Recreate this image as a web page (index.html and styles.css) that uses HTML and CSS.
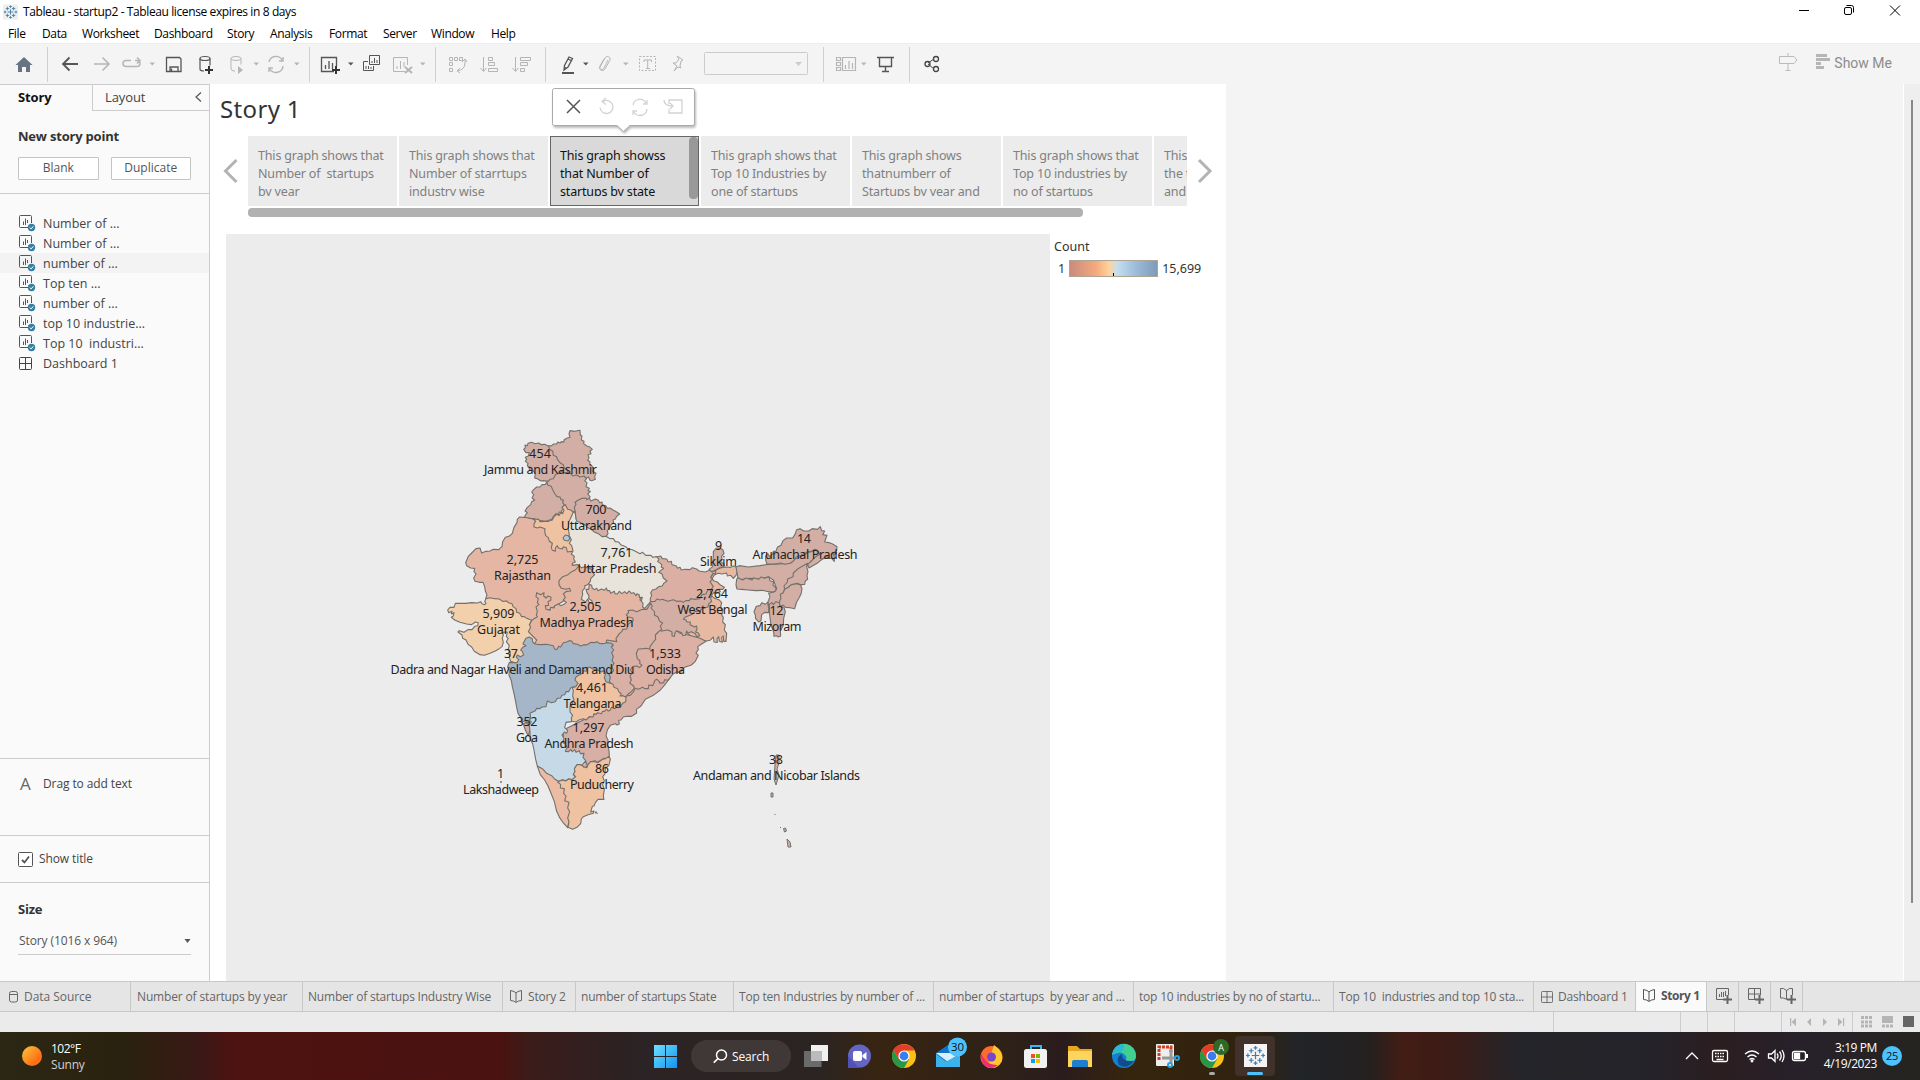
FILE: index.html
```html
<!DOCTYPE html>
<html lang="en">
<head>
<meta charset="utf-8">
<title>Tableau - startup2</title>
<link rel="stylesheet" href="styles.css">
</head>
<body>
<svg class="defs" aria-hidden="true">
  <defs>
    <symbol id="sheet" viewBox="0 0 17 17"><path d="M9 12.500H1.500a1 1 0 0 1-1-1v-10a1 1 0 0 1 1-1h10a1 1 0 0 1 1 1V8M4.500 10V6.500M6.500 10V3.500M8.500 8V5" fill="none" stroke="#555"/><circle cx="12.500" cy="12.500" r="3.700" fill="#3a7f9f"/><path d="m10.700 12.500 1.400 1.400 2.300-2.600" fill="none" stroke="#fff"/></symbol>
    <symbol id="grid" viewBox="0 0 13 13"><path d="M.5 1.500a1 1 0 0 1 1-1h10a1 1 0 0 1 1 1v10a1 1 0 0 1-1 1h-10a1 1 0 0 1-1-1zM6.500.5v12M.5 6.500h12" fill="none" stroke="currentColor"/></symbol>
    <symbol id="book" viewBox="0 0 13 13"><path d="M6 3 4 1.500.5.5v10l3 .5L6 12.500 8.500 11l3-.5V.5L8 1.500zM6 3v9" fill="none" stroke="currentColor"/></symbol>
    <symbol id="plus" viewBox="0 0 9 9"><path d="M4.500 0v9M0 4.500h9" stroke="currentColor" stroke-width="2"/></symbol>
    <symbol id="caret" viewBox="0 0 6 4"><path d="M0 0h6L3 4z" fill="currentColor"/></symbol>
    <symbol id="tableau" viewBox="0 0 20 20"><path d="M10 6v8M6 10h8M5.500 2.500v5M3 5h5M14.500 2.500v5M12 5h5M5.500 12.500v5M3 15h5M14.500 12.500v5M12 15h5M10 0v4M8 2h4M10 16v4M8 18h4M2 8v4M0 10h4M18 8v4M16 10h4" stroke="#3f7ea8" stroke-width="1.300"/></symbol>
    <symbol id="chrome" viewBox="0 0 24 24"><circle cx="12" cy="12" r="12" fill="#fbc116"/><path d="M1.600 6A12 12 0 0 0 12 24l5.200-9L12 12 6.800 15z" fill="#279847"/><path d="M1.600 6A12 12 0 0 1 22.400 6.500H12L6.800 15z" fill="#e33b2e"/><circle cx="12" cy="12" r="5.600" fill="#fff"/><circle cx="12" cy="12" r="4.400" fill="#3b7ded"/></symbol>
  </defs>
</svg>
<div class="window">
  <header class="titlebar">
    <svg class="logo" width="15" height="16" viewBox="-1 -1 22 22"><rect x="-1" y="-1" width="22" height="22" fill="#eee"/><use href="#tableau" width="20" height="20"/></svg>
    <span class="title">Tableau - startup2 - Tableau license expires in 8 days</span>
    <svg class="winbtns" width="110" height="20" viewBox="0 0 110 20" fill="none" stroke="#000"><path d="M4 10.500h10M95 5.500l10 10M105 5.500l-10 10"/><rect x="49.500" y="7.500" width="7" height="7" rx="1.500"/><path d="M51.500 5.500h5a2 2 0 0 1 2 2v5"/></svg>
  </header>
  <nav class="menu"><span>File</span><span>Data</span><span>Worksheet</span><span>Dashboard</span><span>Story</span><span>Analysis</span><span>Format</span><span>Server</span><span>Window</span><span>Help</span></nav>
  <div class="toolbar">
    <svg width="960" height="40" viewBox="0 44 960 40" fill="none" stroke="#b5b5b5">
      <path d="M47.500 47v35M309.500 47v35M435.500 47v35M545.500 47v35M823.500 47v35M909.500 47v35" stroke="#d0d0d0"/>
      <path d="m24 57 8.500 8h-2.500v7h-4v-5h-4v5h-4v-7h-2.500z" fill="#667383" stroke="none"/>
      <path d="M78 64H63m6.500-6.500L63 64l6.500 6.500" stroke="#555" stroke-width="1.800"/>
      <path d="M94 64h15m-6.500-6.500L109 64l-6.500 6.500" stroke-width="1.500"/>
      <path d="M131 60.500h-5a3 3 0 0 0 0 6h11a3 3 0 0 0 3-3q0-3-3-3h-2m2-3 3 3-3 3" stroke-width="1.500"/>
      <path d="M166.500 57.500h13l1.500 1.500v12.500h-14.500zM170 71v-4h8v4M171.500 71v-2.500" stroke="#555" stroke-width="1.300"/>
      <ellipse cx="205" cy="58.500" rx="5" ry="2" stroke="#555" stroke-width="1.200"/><path d="M200 58.500V69q0 2 4 2M210 58.500v7" stroke="#555" stroke-width="1.200"/>
      <path d="M209 66v8M205 70h8" stroke="#333" stroke-width="2"/>
      <ellipse cx="236" cy="58.500" rx="5" ry="2"/><path d="M231 58.500V69q0 2 4 2M241 58.500v6"/><path d="M238 66v8l5-4z" fill="#b5b5b5" stroke="none"/>
      <path d="M269 62a7 7 0 0 1 13-2m1-3v4h-4M283 66a7 7 0 0 1-13 3m-1 3v-4h4" stroke-width="1.400"/>
      <path d="M334 71.500h-12.500v-14h15V66M325.500 69v-4M329 69v-8M332.500 69v-6" stroke="#555" stroke-width="1.300"/><path d="M336 66v8M332 70h8" stroke="#333" stroke-width="2"/>
      <path d="M369.500 55.500h10v9h-10zM372 63v-2M374.500 63v-5M377 63v-3M368 61.500h-4.500v9h10V66M366 69v-3M368.500 69v-3M371 69v-2" stroke="#555"/>
      <path d="M405 71.500h-11.500v-14h14V65M397 69v-3M400.500 69v-8M404 67v-5"/><path d="m405 67 7 6m0-6-7 6" stroke-width="2"/>
      <path d="M449.500 57.500h3v3h-3zM454.500 57.500h3v3h-3zM459.500 57.500h3v3h-3zM449.500 62.500h3v3h-3zM449.500 68.500h3v3h-3zM465 60v3q0 7-8 8m3-3-3 3 3 2M462 62l3-3 2 3"/>
      <path d="M483.500 57v14m-3-3 3 3.500 3-3.500M488.500 57.500h4v3h-4zM488.500 62.500h6v3h-6zM488.500 68.500h9v3h-9zM515.500 57v14m-3-3 3 3.500 3-3.500M520.500 57.500h10v3h-10zM520.500 62.500h7v3h-7zM520.500 68.500h4v3h-4z"/>
      <path d="m569 57 3.500 1.500-4.500 8.500-4 3 .5-4.500zM564 67l3 1.500M568 59l3 1.500" stroke="#555" stroke-width="1.300"/><path d="M562 73h12" stroke="#555" stroke-width="2"/>
      <path d="m608 60-4 8c-1.500 3-5 1-4-1l5-9c1.500-3 6-1 5 2l-5 9c-2 3-7 1-5-3l4-7"/>
      <path d="M639.500 56.500h16v14h-16z" stroke-dasharray="2 1.500"/><path d="M644 62v-2h7.500v2M647.700 60v8M646 68.500h4"/>
      <path d="m677 56 6 4-2 1-1 5 1 2-3-1-4 4 3-5-4-3 3 0 3-4z"/>
      <rect x="704.500" y="52.500" width="103" height="22" rx="1" stroke="#ccc"/><path d="M795 62h7l-3.500 4z" fill="#ccc" stroke="none"/>
      <path d="M836.500 57.500h4v3h-4zM836.500 62.500h4v3h-4zM836.500 67.500h4v3h-4zM842.500 57.500h13v13h-13zM845.500 69v-4M849 69v-8M852.500 69v-6" stroke-width="1.200"/>
      <path d="M877 57.500h17M879.500 58v8.500h12V58M885.500 67v4M882 71.500h7" stroke="#555" stroke-width="1.400"/>
      <path d="m928 63 6-4m-6 5 6 5" stroke="#444"/><circle cx="927.500" cy="64" r="2.500" stroke="#444" stroke-width="1.300"/><circle cx="936" cy="59" r="2.500" stroke="#444" stroke-width="1.300"/><circle cx="936" cy="69" r="2.500" stroke="#444" stroke-width="1.300"/>
      <g fill="#b5b5b5" stroke="none"><path d="M149.500 62.500h5.500l-2.700 3zM253.500 62.500h5.500l-2.700 3zM294 62.500h5.500l-2.700 3zM420 62.500h5.500l-2.700 3zM623 62.500h5.500l-2.700 3zM861 62.500h5.500l-2.700 3z"/><path d="M348 62.500h5.500l-2.700 3zM583 62.500h5.500l-2.700 3z" fill="#555"/></g>
    </svg>
    <div class="showme">
      <svg width="54" height="20" viewBox="0 0 54 20"><path d="M.5 3.500H15l3 3.500-3 3.500H.5zM9 0v3M9 11v6M6.500 17.500h5" fill="none" stroke="#bbb"/><path d="M37 1h11v3H37zM37 5h14v3H37zM37 9h5v3h-5zM37 13h8v3h-8z" fill="#b5b5b5"/></svg>
      <span>Show Me</span>
    </div>
  </div>
  <main class="work">
    <aside class="side">
      <div class="tabs"><b>Story</b><div class="layout"><span>Layout</span><svg width="7" height="10" viewBox="0 0 7 10"><path d="M6 .5 1 5l5 4.500" fill="none" stroke="#555" stroke-width="1.200"/></svg></div></div>
      <section class="new"><h2>New story point</h2><div class="btns"><button>Blank</button><button>Duplicate</button></div></section>
      <ul class="sheets">
        <li><svg><use href="#sheet" width="17" height="17"/></svg>Number of ...</li>
        <li><svg><use href="#sheet" width="17" height="17"/></svg>Number of ...</li>
        <li class="hot"><svg><use href="#sheet" width="17" height="17"/></svg>number of ...</li>
        <li><svg><use href="#sheet" width="17" height="17"/></svg>Top ten ...</li>
        <li><svg><use href="#sheet" width="17" height="17"/></svg>number of ...</li>
        <li><svg><use href="#sheet" width="17" height="17"/></svg>top 10 industrie...</li>
        <li><svg><use href="#sheet" width="17" height="17"/></svg>Top 10&nbsp; industri...</li>
        <li><svg><use href="#grid" width="13" height="13" y="2"/></svg>Dashboard 1</li>
      </ul>
      <section class="drag"><i>A</i>Drag to add text</section>
      <section class="show"><svg width="15" height="15" viewBox="0 0 15 15"><rect x=".5" y=".5" width="14" height="14" rx="1" fill="#fff" stroke="#555"/><path d="m4 8 2.500 2.500 4.500-6" fill="none" stroke="#555" stroke-width="1.800"/></svg>Show title</section>
      <section class="size"><h2>Size</h2><div class="select">Story (1016 x 964)<svg width="7" height="4"><use href="#caret" width="7" height="4"/></svg></div></section>
    </aside>
    <article class="story">
      <h1>Story 1</h1>
      <div class="nav">
        <svg class="prev" width="16" height="26" viewBox="0 0 16 26"><path d="M13.500 2 2.500 13l11 11" fill="none" stroke="#b3b3b3" stroke-width="3"/></svg>
        <div class="points">
          <div class="pt"><p>This graph shows that<br>Number of&nbsp; startups<br>by year</p></div>
          <div class="pt"><p>This graph shows that<br>Number of starrtups<br>industry wise</p></div>
          <div class="pt sel"><p>This graph showss<br>that Number of<br>startups by state</p><span class="thumb"></span></div>
          <div class="pt"><p>This graph shows that<br>Top 10 Industries by<br>one of startups</p></div>
          <div class="pt"><p>This graph shows<br>thatnumberr of<br>Startups by year and</p></div>
          <div class="pt"><p>This graph shows that<br>Top 10 industries by<br>no of startups</p></div>
          <div class="pt"><p>This graph<br>the top<br>and</p></div>
        </div>
        <svg class="next" width="16" height="26" viewBox="0 0 16 26"><path d="m2 2 11 11L2 24" fill="none" stroke="#b3b3b3" stroke-width="3"/></svg>
      </div>
      <div class="hbar"></div>
      <div class="viz">
        <svg class="map" width="824" height="747" viewBox="226 234 824 747">
          <!-- State outlines: shared borders are drawn by the later shape -->
          <g class="states" transform="translate(440 420) scale(.33333)">
            <polygon points="320,188 335,160 385,130 410,150 435,168 440,176 434,182 441,188 438,200 448,205 444,212 451,214 443,222 450,230 446,238 430,250 420,260 406,274 400,276 385,272 372,262 350,250 330,220"/>
            <polygon points="255,75 262,77 264,70 275,67 285,71 296,69 304,74 314,73 325,78 350,80 370,110 395,150 396,160 385,158 372,158 364,154 360,160 347,163 340,176 330,178 325,184 310,182 303,183 292,176 284,174 286,160 278,152 268,150 270,142 262,138 264,130 256,124 260,118 256,112 265,108 268,98 258,98 251,88 256,84"/>
            <polygon points="325,78 335,77 341,72 350,72 353,66 360,69 364,65 372,66 372,60 380,55 390,52 387,42 390,32 404,34 420,31 421,45 426,48 424,60 432,64 431,71 440,78 448,80 457,88 450,93 453,101 444,104 447,114 443,120 450,126 449,134 456,138 460,146 458,154 468,160 464,170 466,178 455,182 449,180 446,171 438,174 432,168 420,171 410,165 398,168 392,160 384,158 382,150 372,143 370,134 362,130 352,118 350,110 340,106 338,93 330,89"/>
            <polygon points="320,187 324,196 334,199 337,207 340,213 345,222 351,230 360,231 363,239 370,240 368,248 374,256 367,261 370,268 364,272 367,278 358,276 355,284 348,281 340,290 335,298 320,303 300,304 285,297 270,295 253,295 256,285 262,278 255,273 262,262 272,254 275,245 284,240 276,234 281,224 275,216 281,209 290,201 300,201 306,194 316,193"/>
            <polygon fill="#e5b6a3" points="253,292 238,291 232,298 231,308 222,322 217,340 207,349 196,352 188,365 186,380 176,389 160,388 150,393 138,394 125,399 120,384 108,386 95,399 85,409 77,428 80,437 92,444 104,445 102,455 108,462 101,474 105,484 118,487 129,487 134,500 136,513 141,525 137,536 180,560 215,590 275,605 310,580 410,520 480,450 430,410 400,370 340,310"/>
            <polygon fill="#e4b5a2" points="430,432 415,440 406,450 395,455 384,464 368,470 357,482 357,494 364,505 378,508 389,505 392,513 378,515 370,522 376,532 370,540 379,547 372,553 362,557 355,552 344,557 342,564 332,562 330,571 318,568 316,557 326,556 324,545 332,541 333,532 324,528 318,534 311,528 312,518 302,524 290,518 288,530 295,536 292,548 297,554 288,560 292,575 289,585 292,590 282,596 275,602 262,625 265,660 280,690 350,710 510,690 560,640 630,570 620,500 500,480"/>
            <polygon fill="#efc3a2" points="280,297 296,298 300,305 315,304 325,304 337,300 342,290 352,282 357,287 362,278 368,281 372,270 366,262 376,254 383,268 392,270 400,276 410,300 410,400 395,394 382,396 379,383 370,380 367,387 355,384 352,377 346,384 346,394 337,391 334,383 337,370 328,364 325,353 317,347 314,334 315,326 300,321 292,324 282,321 282,311 287,304"/>
            <polygon points="406,276 403,262 408,253 405,247 414,241 426,235 438,234 440,239 448,235 453,243 466,237 475,241 479,248 486,246 487,254 497,257 502,265 510,264 518,269 530,276 539,282 530,289 526,297 519,300 521,308 513,314 509,323 502,332 504,341 498,350 480,370 410,350"/>
            <polygon fill="#e7b8a2" points="820,460 828,449 844,443 858,441 872,442 880,438 890,442 892,455 888,466 880,475 872,466 862,468 860,459 846,462 834,460 823,465 817,475 820,482 832,486 840,494 853,502 848,508 836,508 841,515 830,520 822,517 814,526 824,535 838,540 845,548 842,560 849,570 845,585 850,592 848,606 856,614 853,630 860,640 858,664 851,664 850,648 845,652 847,667 838,664 836,650 831,657 832,667 822,666 820,651 810,661 795,664 770,665 700,600 760,560"/>
            <polygon fill="#dcafa4" points="650,411 662,408 667,416 680,417 685,426 694,424 696,434 708,437 713,445 720,442 724,450 735,448 750,449 757,443 770,447 777,453 795,456 810,451 817,456 828,450 826,461 818,461 812,472 817,479 810,485 820,500 812,510 815,530 750,550 630,560 600,540 630,450"/>
            <polygon fill="#d8afa5" points="370,930 370,1000 430,1050 440,1040 452,1025 465,1022 472,1027 490,1016 502,1014 508,1008 507,992 503,975 504,960 498,948 502,930 511,916 526,911 531,915 538,912 536,901 543,900 550,891 560,889 575,889 590,879 589,868 603,858 616,838 640,826 661,810 673,796 690,774 680,740 550,800 530,850"/>
            <polygon fill="#dcb0a5" points="640,620 665,632 700,625 720,640 745,645 780,655 798,664 785,672 773,680 775,688 768,699 775,706 766,724 754,735 734,742 724,750 722,760 712,755 698,763 690,774 683,781 674,779 671,788 660,790 657,784 651,778 645,781 638,797 626,795 625,806 614,806 608,802 595,808 586,805 580,816 571,826 556,829 540,760 560,650"/>
            <polygon fill="#e8e4dc" points="400,276 406,280 408,298 412,305 421,307 428,314 437,315 441,322 455,329 463,336 478,343 486,350 498,349 508,355 520,356 526,365 536,366 542,374 557,380 563,386 577,389 586,394 600,401 608,397 617,406 633,406 638,412 650,410 657,418 653,424 665,433 664,442 671,445 662,452 656,457 666,462 670,474 681,483 671,490 667,498 656,500 648,507 637,510 632,519 635,526 631,536 631,552 623,556 617,567 608,561 609,550 604,543 607,532 598,533 598,525 591,521 588,527 581,518 574,520 568,513 560,521 554,515 546,521 538,514 532,522 525,521 523,514 512,520 509,512 502,512 499,504 493,511 484,507 474,512 470,505 464,509 457,505 455,496 448,493 446,508 438,508 441,518 447,527 446,535 456,543 457,550 448,549 443,537 437,546 424,538 428,523 427,513 435,503 434,497 443,494 451,484 452,476 464,464 455,454 460,445 450,440 441,443 435,440 424,443 413,434 397,436 397,430 406,426 401,417 403,409 394,402 399,393 395,377 388,370 394,359 388,347 385,325 386,306 391,296"/>
            <polygon fill="#a8cadf" points="369,354 376,345 385,347 390,356 384,363 373,361"/>
            <polygon points="632,545 645,544 651,537 660,540 667,538 683,544 700,539 710,544 722,543 730,547 737,542 748,542 751,536 762,538 779,536 786,524 798,522 803,510 811,510 815,525 812,535 815,544 806,552 804,561 784,567 781,574 765,574 757,583 735,592 730,598 738,600 741,606 751,606 750,614 764,621 770,618 771,627 767,636 775,639 779,647 770,650 766,641 754,635 744,639 740,633 737,645 728,647 725,638 710,632 705,638 703,649 696,648 696,636 684,630 665,633 640,620 610,570"/>
            <polygon fill="#d8b0a5" points="607,568 621,568 632,550 637,558 633,564 644,576 643,585 654,591 659,604 668,609 661,618 665,628 655,636 646,645 647,658 640,666 630,680 630,688 618,685 610,686 595,687 589,700 592,716 600,723 599,730 606,736 598,743 591,738 578,740 571,750 577,758 570,768 574,780 569,789 581,798 583,804 575,814 565,822 558,829 540,830 500,800 490,730 500,660 530,665 528,655 538,641 546,634 548,628 560,627 565,612 580,602 578,594 563,590 559,584 566,578 564,572 577,570 590,575"/>
            <polygon fill="#f2d0ac" points="138,536 134,545 138,550 134,554 126,551 122,545 112,549 95,548 77,550 60,550 46,550 42,562 30,562 23,570 26,578 36,574 34,582 42,578 40,588 34,592 44,600 60,607 80,612 95,614 106,606 115,608 113,617 104,619 96,629 84,629 72,637 58,632 54,636 66,645 68,655 78,660 85,674 95,681 103,694 120,704 133,706 150,700 166,693 175,688 186,680 190,668 187,655 190,645 188,637 202,636 199,650 205,655 199,665 208,677 204,690 211,698 208,712 212,724 220,727 240,735 270,700 290,660 265,635 272,622 268,614 275,601 260,595 253,590 245,590 239,580 230,577 228,566 219,560 216,551 205,548 200,543 188,544 178,537 164,536 150,533"/>
            <polygon fill="#a5b6c8" points="258,655 268,651 277,656 278,666 285,672 300,674 320,673 340,677 343,686 350,689 356,679 362,681 370,668 380,666 388,662 395,663 400,671 412,673 422,678 432,674 440,675 453,667 464,668 470,665 478,670 490,671 501,668 514,670 520,675 514,681 521,690 515,698 520,710 516,722 522,730 516,740 521,752 514,759 506,761 511,772 508,785 515,792 505,800 480,820 400,870 270,895 265,910 257,902 246,906 242,892 234,880 231,867 227,845 222,820 217,800 214,782 207,766 208,752 203,740 208,727 220,728 231,728 236,719 229,712 232,705 241,710 251,705 247,694 242,690 248,682 258,677 249,672 252,665"/>
            <polygon points="250,912 258,907 267,915 270,930 265,948 256,930"/>
            <polygon fill="#ebbba3" points="292,1038 301,1064 314,1080 324,1098 334,1122 343,1145 350,1174 359,1193 370,1209 383,1223 395,1170 395,1110 350,1060"/>
            <polygon fill="#c5d9e7" points="400,800 392,804 386,815 378,815 374,824 365,826 362,834 352,835 346,845 334,848 322,843 318,860 306,861 300,866 290,865 286,872 270,880 272,892 269,901 274,905 268,915 270,935 270,955 278,972 282,990 287,1018 292,1038 307,1046 320,1060 335,1067 344,1077 355,1084 368,1079 378,1082 385,1077 396,1079 407,1071 400,1064 405,1055 404,1046 411,1035 420,1034 432,1039 438,1023 429,1012 432,1000 421,1001 418,992 408,997 404,989 397,995 392,988 386,995 376,994 382,982 375,972 368,966 372,955 366,945 373,936 380,940 383,931 374,923 378,907 395,905 420,880 420,810"/>
            <polygon fill="#efc3a2" points="353,1086 366,1080 377,1083 386,1077 397,1079 407,1070 400,1063 405,1055 403,1046 411,1034 420,1034 432,1039 440,1043 444,1034 452,1025 465,1025 474,1028 488,1018 497,1016 507,1009 511,1018 507,1035 496,1046 495,1062 488,1070 493,1082 488,1094 493,1108 490,1128 492,1138 474,1138 466,1148 462,1158 457,1159 452,1176 462,1173 460,1180 444,1184 430,1190 424,1197 422,1211 411,1222 398,1228 384,1222 387,1205 383,1194 389,1175 383,1164 387,1147 374,1142 378,1128 371,1120 373,1106 361,1104 362,1094"/>
            <path d="M466 1180l2-5 2 4 3 2" fill="none"/>
            <polygon fill="#d8afa5" points="426,1035 436,1024 440,1030 442,1040 432,1042"/>
            <polygon fill="#efc3a2" points="395,904 394,893 398,886 390,876 390,859 398,852 396,845 402,840 398,828 400,812 397,803 407,800 414,790 405,780 408,771 416,766 428,760 430,752 439,754 440,745 449,741 458,747 475,751 483,756 492,752 497,760 493,773 498,785 510,790 519,793 522,802 533,806 536,815 544,822 540,828 549,827 558,832 557,845 548,850 542,859 535,854 525,866 514,862 511,870 505,873 499,868 493,874 488,874 484,881 473,878 468,883 462,881 459,891 448,890 438,900 430,896 417,900 409,906"/>
            <polygon points="888,441 898,437 925,441 960,437 985,433 1020,432 1054,428 1064,418 1080,410 1102,398 1120,393 1140,382 1170,395 1190,398 1178,410 1150,416 1105,435 1085,450 1070,480 1035,510 1022,550 985,556 984,545 990,530 986,520 1004,515 1010,506 1000,480 985,470 960,478 930,475 895,480"/>
            <polygon points="981,432 977,420 977,408 984,401 988,410 998,402 1000,394 1008,394 1012,382 1023,376 1029,362 1040,354 1058,354 1065,343 1070,329 1080,326 1091,333 1106,333 1117,326 1132,328 1141,320 1145,332 1154,333 1148,344 1161,346 1157,357 1154,366 1168,368 1178,372 1191,380 1190,391 1178,400 1183,410 1183,424 1175,415 1165,414 1159,407 1146,418 1134,428 1118,437 1107,444 1103,434 1117,420 1125,412 1139,403 1133,391 1124,388 1113,395 1105,394 1090,403 1070,410 1060,423 1050,430 1035,433 1022,429 1002,432"/>
            <polygon points="1103,430 1100,440 1104,455 1101,466 1103,478 1096,483 1094,493 1083,494 1071,490 1060,496 1052,496 1040,507 1033,518 1027,525 1034,508 1032,498 1042,486 1043,477 1059,470 1060,459 1072,448 1084,440"/>
            <polygon points="1018,558 1019,543 1023,535 1021,523 1030,518 1034,508 1046,501 1054,494 1070,491 1082,495 1086,507 1083,522 1077,534 1070,546 1064,566 1050,563 1037,562 1030,556"/>
            <polygon points="890,478 894,473 908,480 918,474 936,480 941,473 955,478 964,471 973,475 987,471 990,482 1001,485 999,495 1008,504 1007,513 997,516 985,515 967,511 947,512 925,510 905,508 891,507 888,495"/>
            <polygon points="988,553 995,548 1000,554 1008,545 1018,548 1020,559 1032,562 1036,575 1031,595 1030,616 1021,633 1022,648 1015,651 1009,647 1002,649 1001,636 993,615 989,585"/>
            <polygon points="942,575 949,559 960,557 966,548 975,553 983,547 986,565 986,578 974,577 965,584 963,602 956,606 947,596 946,585"/>
            <polygon points="819,422 820,407 820,395 829,384 840,384 849,390 852,400 844,410 847,418 842,425 852,432 853,439 841,442 828,449 815,455 807,448 818,440"/>
          </g>
          <g fill="#d2aea5" stroke="#73706b"><path d="M776 755l3 0 0 8-2 6 2 6-3 10-2-6 1-14zM771 793l2 0 0 4-2 0zM787 839l3 3 1 5-3 0zM783.500 828.500l2-.5 1 3-2 1zM780 827l1 1M774.500 814l1 1"/><circle cx="501" cy="782" r=".6"/></g>
          <g class="labels">
            <text x="540" y="458" textLength="22">454</text><text x="540.500" y="474" textLength="113">Jammu and Kashmir</text>
            <text x="596" y="514" textLength="21">700</text><text x="596.500" y="530" textLength="71">Uttarakhand</text>
            <text x="522.500" y="564" textLength="32">2,725</text><text x="522.500" y="580" textLength="57">Rajasthan</text>
            <text x="616.500" y="557" textLength="32">7,761</text><text x="617" y="573" textLength="79">Uttar Pradesh</text>
            <text x="585.500" y="611" textLength="32">2,505</text><text x="586.500" y="627" textLength="94">Madhya Pradesh</text>
            <text x="498.500" y="618" textLength="32">5,909</text><text x="498.500" y="634" textLength="43">Gujarat</text>
            <text x="511" y="658" textLength="14">37</text><text x="512.500" y="674" textLength="244">Dadra and Nagar Haveli and Daman and Diu</text>
            <text x="592" y="692" textLength="32">4,461</text><text x="592.500" y="708" textLength="58">Telangana</text>
            <text x="527" y="726" textLength="21">352</text><text x="527" y="742" textLength="22">Goa</text>
            <text x="588.500" y="732" textLength="32">1,297</text><text x="589" y="748" textLength="89">Andhra Pradesh</text>
            <text x="500.500" y="778">1</text><text x="501" y="794" textLength="76">Lakshadweep</text>
            <text x="602" y="773" textLength="14">86</text><text x="602" y="789" textLength="64">Puducherry</text>
            <text x="718.500" y="550">9</text><text x="718.500" y="566" textLength="37">Sikkim</text>
            <text x="712" y="598" textLength="32">2,764</text><text x="712.500" y="614" textLength="70">West Bengal</text>
            <text x="804" y="543" textLength="14">14</text><text x="805" y="559" textLength="105">Arunachal Pradesh</text>
            <text x="776.500" y="615" textLength="14">12</text><text x="777" y="631" textLength="49">Mizoram</text>
            <text x="665" y="658" textLength="32">1,533</text><text x="665.500" y="674" textLength="39">Odisha</text>
            <text x="776" y="764" textLength="14">38</text><text x="776.500" y="780" textLength="167">Andaman and Nicobar Islands</text>
          </g>
        </svg>
        <div class="legend"><div>Count</div><div class="scale"><span>1</span><i></i><span>15,699</span></div></div>
      </div>
      <svg class="tip" width="152" height="52" viewBox="0 0 152 52"><path d="M3.500 1.500h138a2 2 0 0 1 2 2v33a2 2 0 0 1-2 2H79l-6.500 6-6.500-6H3.500a2 2 0 0 1-2-2v-33a2 2 0 0 1 2-2z" fill="#fff" stroke="#aaa"/><path d="m16 13 13 13m0-13L16 26" stroke="#555" stroke-width="1.500"/><g transform="translate(1 1)" fill="none" stroke="#d3d3d3" stroke-width="1.300"><path d="M51 13.500a6.500 6.500 0 1 1-3 6M54 10l-4 3.500 4 3M81 17a7 7 0 0 1 13-2m1-3v4h-4M95 21a7 7 0 0 1-13 3m-1 3v-4h4M117 16v-4h13v13h-13v-4M112 12q0 6 9 6m-3-3 3 3-3 3"/></g></svg>
    </article>
    <div class="vscroll"><i></i></div>
  </main>
  <div class="sheettabs">
    <div class="w130"><svg width="9" height="12" viewBox="0 0 9 12"><rect x=".5" y=".5" width="8" height="10.500" rx="2" fill="none" stroke="#666"/><path d="M.5 3.500h8" stroke="#666"/></svg>Data Source</div>
    <div class="w172">Number of startups by year</div><div class="w200">Number of startups Industry Wise</div>
    <div class="w73"><svg width="13" height="13"><use href="#book"/></svg>Story 2</div>
    <div class="w158">number of startups State</div><div class="w200">Top ten Industries by number of ...</div><div class="w200">number of startups&nbsp; by year and ...</div><div class="w200">top 10 industries by no of startu...</div><div class="w200">Top 10&nbsp; industries and top 10 sta...</div>
    <div class="w102"><svg width="12" height="12"><use href="#grid" width="12" height="12"/></svg>Dashboard 1</div>
    <div class="w71"><svg width="13" height="13"><use href="#book"/></svg>Story 1</div>
    <div class="w32"><svg width="17" height="17" viewBox="0 0 17 17"><path d="M7 11.500H.5V.5h12V7M3.500 9V6M5.500 9V4M7.500 9V4M9.500 8V3" fill="none" stroke="#666"/><use href="#plus" x="7" y="7" width="9" height="9"/></svg></div>
    <div class="w32"><svg width="17" height="17" viewBox="0 0 17 17"><path d="M7 11.500H.5V.5h12V7M6.500 0v12M0 6h12" fill="none" stroke="#666"/><use href="#plus" x="7" y="7" width="9" height="9"/></svg></div>
    <div class="w32"><svg width="17" height="17" viewBox="0 0 17 17"><path d="M7 11.500 3.500 10H.5V.5h3l3 2 3-2h3V7M6.500 2v9" fill="none" stroke="#666"/><use href="#plus" x="7" y="7" width="9" height="9"/></svg></div>
  </div>
  <div class="status"><svg width="370" height="20" viewBox="1550 0 370 20"><path d="M1553.500 0v20M1680.500 0v20M1707.500 0v20M1734.500 0v20M1781.500 0v20M1852.500 0v20" stroke="#ccc"/><path d="M1790 6h1.200v8H1790zM1796 6v8l-4.500-4zM1811 6v8l-4-4zM1823 6v8l4-4zM1838 6v8l4.500-4zM1843 6h1.200v8H1843zM1861 4h3v3h-3zM1865 4h3v3h-3zM1869 4h3v3h-3zM1861 8.500h3v3h-3zM1865 8.500h3v3h-3zM1869 8.500h3v3h-3zM1861 12.500h3v3h-3zM1865 12.500h3v3h-3zM1869 12.500h3v3h-3zM1882 4h11v7h-11zM1882 12.500h3v3h-3zM1886 12.500h3v3h-3zM1890 12.500h3v3h-3z" fill="#b5b5b5"/><path d="M1903 4h11v11h-11z" fill="#666"/></svg></div>
  <footer class="taskbar">
    <div class="weather"><i></i><div>102°F<br><span>Sunny</span></div></div>
    <div class="apps">
      <svg class="start" width="23" height="23" viewBox="0 0 23 23"><defs><linearGradient id="w" x1="0" y1="0" x2="1" y2="1"><stop stop-color="#6fe0ff"/><stop offset="1" stop-color="#1193f0"/></linearGradient></defs><path d="M0 0h11v11H0zM12 0h11v11H12zM0 12h11v11H0zM12 12h11v11H12z" fill="url(#w)"/></svg>
      <div class="search"><svg width="15" height="15" viewBox="0 0 15 15"><circle cx="8.500" cy="6" r="5" fill="none" stroke="#fff" stroke-width="1.500"/><path d="M5 9.500.8 13.700" stroke="#fff" stroke-width="1.700"/></svg>Search</div>
      <svg class="tray" width="440" height="44" viewBox="800 1034 440 44">
        <path d="M811 1045h17v16h-17z" fill="#f0f0f0"/><path d="M804 1051h17.500v16H804z" fill="#777" opacity=".85"/><path d="M811 1051h10.500v10H811z" fill="#bbb"/>
        <circle cx="859.500" cy="1056" r="11.500" fill="#6464c4"/><path d="M848 1056v12h11z" fill="#5052b8"/><rect x="853" y="1051" width="9" height="10" rx="2" fill="#fff"/><path d="m862.500 1055 4-3v8l-4-3z" fill="#fff"/>
        <use href="#chrome" x="892" y="1044" width="24" height="24"/>
        <path d="m936 1053 12-8 12 8v14h-24z" fill="#1274c8"/><path d="M936 1053h24l-12 9z" fill="#d9effb"/><path d="M936 1054 953 1067h-17zM960 1054v13h-24z" fill="#3bb2ec"/>
        <circle cx="957.500" cy="1047" r="9.500" fill="#4cc2ff"/><text x="957.500" y="1051" class="bd">30</text>
        <circle cx="991.500" cy="1057" r="11" fill="#ff6a2d"/><path d="M994 1045q10 7 8 16-4 8-12 7-8-2-9-11 3 8 9 5-5-3 1-8z" fill="#ffc72e"/><path d="M981 1053q5 13 17 12-5 5-11 2-7-4-6-14z" fill="#ec2d74"/><circle cx="991.500" cy="1057" r="4.500" fill="#7745cf"/>
        <path d="M1031 1050v-4h10v4" fill="none" stroke="#3ab4f2" stroke-width="2"/><rect x="1024" y="1049" width="23" height="19" rx="2.500" fill="#f1f1f1"/><path d="M1031 1054h4v4h-4z" fill="#f25022"/><path d="M1036 1054h4v4h-4z" fill="#7fba00"/><path d="M1031 1059h4v4h-4z" fill="#00a4ef"/><path d="M1036 1059h4v4h-4z" fill="#ffb900"/>
        <path d="M1068 1046h9l3 3h12v18h-24z" fill="#e6a523"/><path d="M1068 1051h24v16h-24z" fill="#ffd45c"/><path d="M1072 1067v-5q0-2 2-2h12q2 0 2 2v5z" fill="#1c7fd0"/>
        <circle cx="1124" cy="1056" r="12" fill="#1680cf"/><path d="M1113 1051a12 12 0 0 1 23 5q0 5-5 5h-6q3-3 0-6-4-5-13 0z" fill="#42cf92"/><path d="M1112 1055q2-11 12-11 0 6-3 8-4-1-9 3z" fill="#28b8dc"/><path d="M1119 1065q-4-8 3-11-1 8 12 7-7 9-15 4z" fill="#124b92"/>
        <rect x="1156" y="1044" width="18" height="22" rx="1" fill="#eee"/><path d="M1159 1060v-13h12v5" fill="none" stroke="#cf3f22" stroke-width="3" stroke-dasharray="3 1"/><path d="M1162 1058h13M1171 1049v14" stroke="#999" stroke-width="3"/><circle cx="1177" cy="1058" r="2" fill="none" stroke="#2aa1dc" stroke-width="2"/><circle cx="1170" cy="1065" r="2" fill="none" stroke="#2aa1dc" stroke-width="2"/>
        <use href="#chrome" x="1200" y="1044" width="24" height="24"/><circle cx="1221" cy="1047" r="8" fill="#2e6926"/><text x="1221" y="1050.500" class="ba">A</text><rect x="1209" y="1072" width="6" height="3" rx="1.500" fill="#aaa"/>
      </svg>
      <div class="active"><svg width="23" height="23" viewBox="0 0 23 23"><path d="M0 0h23v23H0z" fill="#f4f4f4"/><use href="#tableau" x="2" y="2" width="19" height="19"/></svg><i></i></div>
    </div>
    <svg class="systray" width="130" height="30" viewBox="1684 1041 130 30" fill="none" stroke="#fff" stroke-width="1.300"><path d="m1686 1059 6-6 6 6"/><rect x="1712.500" y="1050.500" width="15" height="11" rx="1.500"/><path d="M1715 1053.500h10M1715 1056.500h10" stroke-dasharray="1.500 1"/><path d="M1716.500 1059.500h7M1745 1054q7-6 14 0M1747.500 1057q4.500-4 9 0M1749.500 1059.500q2.500-2 5 0"/><circle cx="1752" cy="1061" r=".8" fill="#fff"/><path d="M1768.500 1054h3l3.500-3.500v11l-3.500-3.500h-3zM1777 1053.500q2 2.500 0 5M1779.500 1051.500q3.500 4.500 0 9M1782 1050q4 6 0 12"/><rect x="1792.500" y="1051.500" width="13" height="9" rx="2"/><path d="M1794.500 1053.500h5v5h-5z" fill="#fff"/><path d="M1807 1054v4" stroke-width="2"/></svg>
    <div class="clock">3:19 PM<br>4/19/2023</div><b class="count">25</b>
  </footer>
</div>
</body>
</html>
```
FILE: styles.css
```css
* { box-sizing: border-box; }
body { margin: 0; font: 12.500px/16px "Open Sans", "Noto Sans", sans-serif; color: #444; overflow: hidden; }
h1, h2, p, ul { margin: 0; padding: 0; }
.defs { position: absolute; width: 0; height: 0; }
.window { width: 1920px; height: 1080px; display: flex; flex-direction: column; background: #fff; }
.titlebar { height: 22px; display: flex; align-items: center; padding: 1px 15px 0 3px; color: #000; }
.title { font-size: 12px; letter-spacing: -.39px; margin-left: 5px; }
.winbtns { margin: 0 0 3px auto; }
.menu { height: 21px; display: grid; grid-template-columns: 34px 40px 72px 73px 43px 59px 54px 48px 60px 60px; padding-left: 8px; align-items: center; color: #000; font-size: 12px; letter-spacing: -.36px; padding-top: 3px; }
.toolbar { height: 41px; background: #f4f4f4; display: flex; justify-content: space-between; border-top: 1px solid #eee; }
.toolbar > svg { flex: none; }
.showme { display: flex; align-items: center; color: #8c8c8c; padding: 0 28px 2px 0; gap: 1px; font: 14px Roboto, sans-serif; }
.work { height: 897px; display: flex; background: #f4f4f4; }
.side { width: 210px; border-right: 1px solid #ccc; background: #fafafa; display: flex; flex-direction: column; font-size: 12px; letter-spacing: -.1px; }
.side section { border-top: 1px solid #ccc; }
.tabs { height: 27px; display: flex; border-top: 1px solid #ccc; }
.tabs b { width: 92px; padding: 4px 18px; color: #111; font-size: 13px; }
.layout { flex: 1; border: solid #ccc; border-width: 0 0 1px 1px; display: flex; justify-content: space-between; align-items: center; padding: 0 7px 2px 12px; font-size: 13px; }
h2 { font-size: 13px; line-height: 16px; font-weight: 700; color: #333; letter-spacing: -.2px; }
.side .new { border: 0; padding: 17px 18px 0; height: 82px; }
.btns { display: flex; gap: 12px; margin-top: 13px; }
button { width: 81px; height: 23px; border: 1px solid #c4c4c4; border-radius: 1px; background: #fff; padding: 0 0 1px; font: inherit; color: #555; }
.sheets { list-style: none; border-top: 1px solid #ccc; padding-top: 19px; flex: 1; }
.sheets li { height: 20px; display: flex; align-items: center; padding: 1px 0 0 19px; font-size: 12.500px; letter-spacing: 0; }
.sheets svg { width: 24px; height: 17px; }
.sheets .hot { background: #f3f3f3; }
.drag { height: 77px; padding: 17px 20px; display: flex; gap: 12px; }
.drag i { font: 17px/16px "Open Sans", sans-serif; color: #666; width: 11px; }
.show { height: 47px; padding-left: 18px; display: flex; align-items: center; gap: 6px; }
.size { height: 99px; padding: 18px 18px; }
.select { margin-top: 12px; height: 26px; border-bottom: 1px solid #ccc; display: flex; align-items: center; justify-content: space-between; padding: 0 0 1px 1px; color: #555; }
.story { position: relative; width: 1016px; background: #fff; display: flex; flex-direction: column; }
h1 { font: 24px/32px "Noto Sans", sans-serif; letter-spacing: .35px; color: #333; height: 52px; padding: 9px 0 0 10px; }
.nav { display: flex; height: 70px; align-items: center; }
.prev { margin: 0 9px 0 13px; }
.next { margin-left: 10px; }
.points { width: 939px; height: 70px; display: flex; gap: 2px; overflow: hidden; }
.pt { flex: none; width: 149px; background: #ececec; padding: 11px 0 0 10px; font: 12.500px/18px "Noto Sans", sans-serif; color: #808080; position: relative; letter-spacing: -.17px; }
.pt p { height: 49px; overflow: hidden; white-space: nowrap; }
.sel { background: #d9d9d9; border: 1px solid #666; color: #111; padding: 10px 0 0 9px; }
.thumb { position: absolute; right: 0; top: 0; width: 9px; height: 62px; border-radius: 4px; background: #999; }
.hbar { margin: 2px 0 17px 38px; width: 835px; height: 9px; border-radius: 4px; background: #b1b1b1; flex: none; }
.viz { display: flex; padding-left: 16px; flex: 1; }
.map { background: #ececec; flex: none; }
.states { fill: #d2aea5; stroke: #73706b; stroke-width: 3.300px; stroke-linejoin: round; }
.labels { font: 12.500px "Noto Sans", sans-serif; fill: #222; text-anchor: middle; }
.legend { padding: 5px 0 0 4px; color: #333; font: 12.500px/16px "Noto Sans", sans-serif; }
.scale { display: flex; gap: 4px; align-items: center; padding: 5px 0 0 4px; }
.scale i { width: 89px; height: 17px; border: 1px solid #aca591; background: linear-gradient(#000, #000) 43px 100% / 1px 3px no-repeat, linear-gradient(90deg, #c98b7d, #f4aa7d 30%, #ffd39a 45%, #c4dfee 54%, #9dbddb 75%, #7e9bb9); }
.tip { position: absolute; left: 341px; top: 3px; filter: drop-shadow(1px 2px 1px #0004); }
.vscroll { margin-left: auto; width: 17px; border-left: 1px solid #fff; background: #eeeeee; padding: 16px 0 0 7px; }
.vscroll i { display: block; width: 2px; height: 803px; background: #888; }
.sheettabs { height: 31px; display: flex; background: #e5e5e5; border: solid #c8c8c8; border-width: 1px 0; color: #666; font-size: 12px; letter-spacing: -.2px; }
.sheettabs div { border-right: 1px solid #c8c8c8; display: flex; align-items: center; padding-left: 5px; gap: 5px; white-space: nowrap; flex: none; }
.sheettabs .w130 { width: 131px; padding-left: 9px; gap: 6px; letter-spacing: -.05px; }
.sheettabs .w172 { width: 172px; padding-left: 6px; letter-spacing: -.15px; } .w200 { width: 200px; } .w73 { width: 73px; } .w158 { width: 158px; } .w102 { width: 102px; }
.sheettabs .w73, .sheettabs .w102, .sheettabs .w71 { padding-left: 7px; }
.sheettabs .w71 { width: 71px; background: #fafafa; font-weight: 700; color: #555; padding-bottom: 2px; letter-spacing: -.4px; }
.sheettabs .w32 { width: 32px; padding-left: 9px; }
.status { height: 20px; background: #ebebeb; display: flex; justify-content: flex-end; }
.taskbar { height: 48px; display: flex; align-items: center; color: #fff; background: linear-gradient(90deg, #2c2714 0, #29220f 120px, #3a1916 200px, #4c1310 230px, #4a1210 500px, #3a1c19 530px, #2b2325 640px, #2c2422 820px, #382411 880px, #2e2119 1010px, #2a1c1d 1060px, #36250e 1130px, #30220f 1250px, #212428 1300px, #24201f 1370px, #421d15 1400px, #3b1c16 1450px, #24252a 1520px, #242329 1650px, #2b1e21 1720px, #27212a 1800px, #252420 1920px); }
.weather { display: flex; gap: 9px; margin-left: 22px; width: 632px; line-height: 16px; font-size: 12px; letter-spacing: -.5px; align-items: center; }
.weather div { padding-top: 2px; }
.weather i { width: 20px; height: 20px; border-radius: 50%; background: linear-gradient(135deg, #f7c83c, #ff7316 70%); }
.weather span { color: #d0d0d0; letter-spacing: -.2px; }
.apps { display: flex; align-items: center; width: 622px; }
.search { width: 100px; height: 32px; border-radius: 16px; background: #403836; margin-left: 14px; display: flex; align-items: center; gap: 4px; padding: 1px 0 0 22px; font-size: 12px; letter-spacing: -.15px; }
.tray { margin: 0 0 0 9px; width: 440px; flex: none; }
.active { width: 40px; height: 40px; flex: none; margin-left: -5px; border-radius: 4px; background: #40312b; display: flex; flex-direction: column; align-items: center; padding-top: 8px; gap: 5px; }
.active i { width: 16px; height: 3px; border-radius: 2px; background: #4cc2ff; }
.bd, .ba { font: 11.500px "Open Sans", sans-serif; text-anchor: middle; fill: #111; }
.ba { font-size: 9px; fill: #fff; }
.systray { margin-left: auto; flex: none; }
.clock { width: 63px; text-align: right; font-size: 12px; line-height: 16px; letter-spacing: -.4px; flex: none; }
.count { width: 20px; height: 20px; border-radius: 50%; background: #4cc2ff; color: #111; font: 11px/20px "Open Sans", sans-serif; text-align: center; margin: 0 18px 0 5px; letter-spacing: -.4px; }
```
